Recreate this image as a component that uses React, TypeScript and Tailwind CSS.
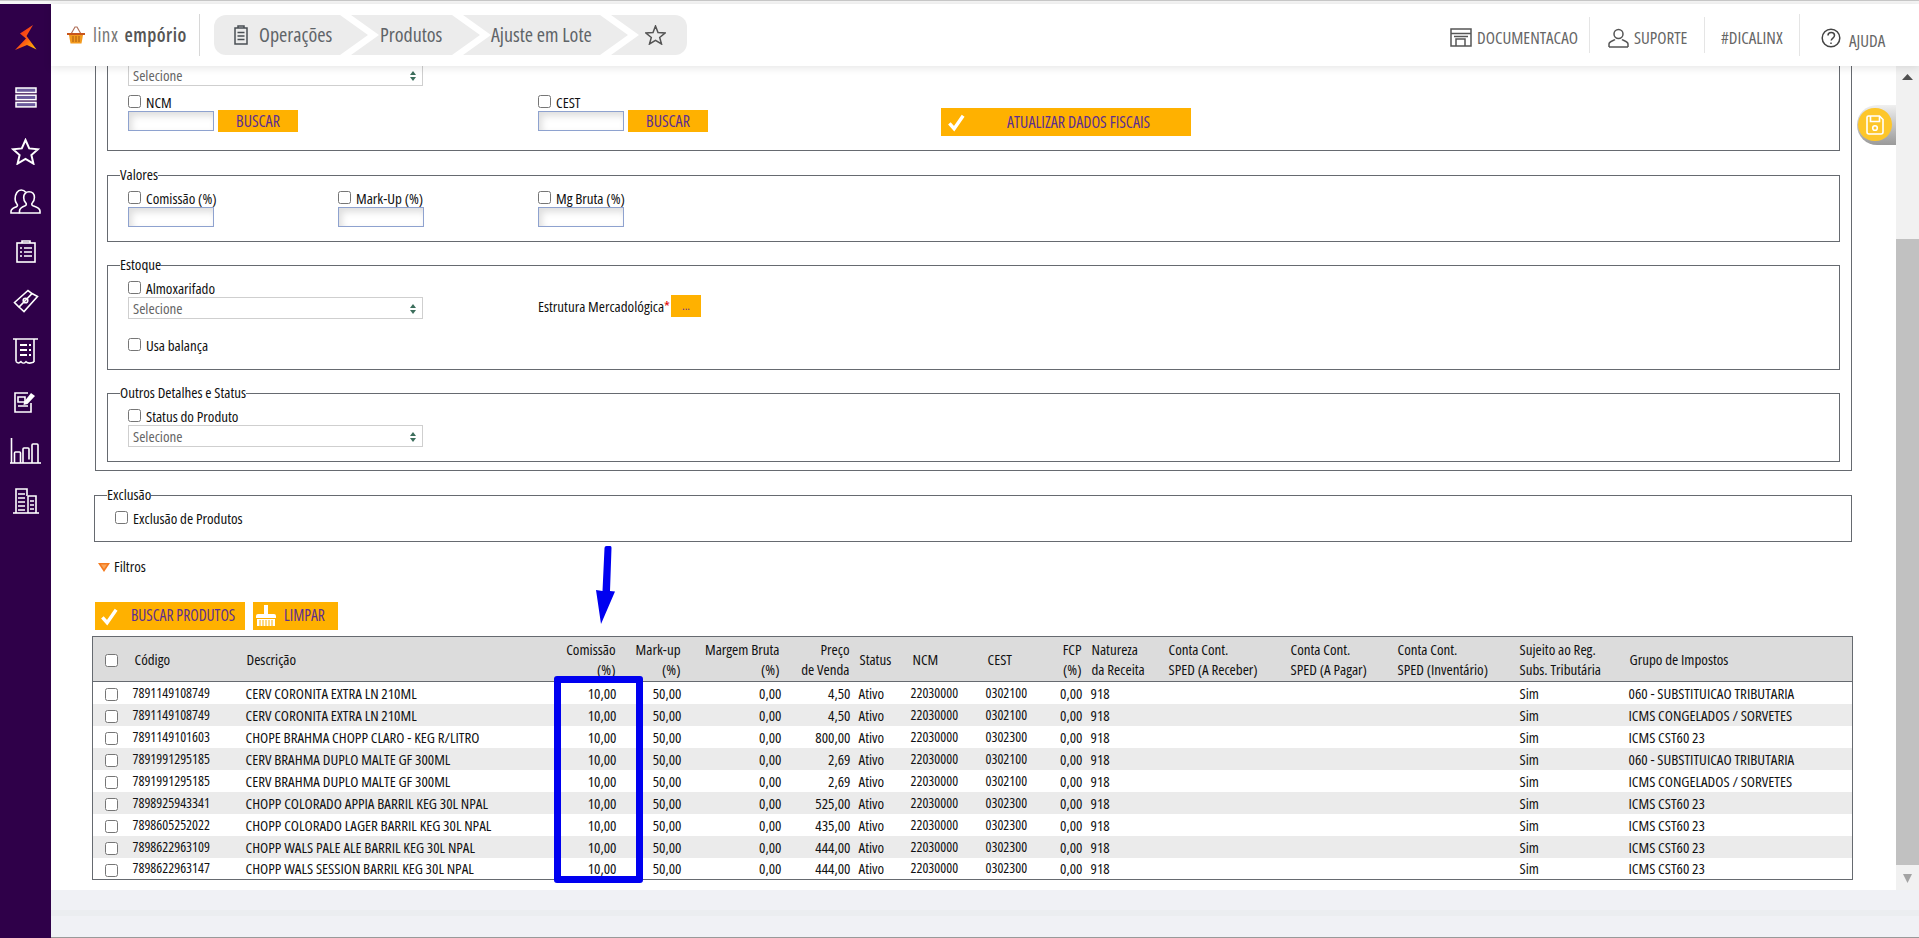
import React from "react";

const rows: [string, string, string, string, string][] = [
  ["7891149108749", "CERV CORONITA EXTRA LN 210ML", "4,50", "0302100", "060 - SUBSTITUICAO TRIBUTARIA"],
  ["7891149108749", "CERV CORONITA EXTRA LN 210ML", "4,50", "0302100", "ICMS CONGELADOS / SORVETES"],
  ["7891149101603", "CHOPE BRAHMA CHOPP CLARO - KEG R/LITRO", "800,00", "0302300", "ICMS CST60 23"],
  ["7891991295185", "CERV BRAHMA DUPLO MALTE GF 300ML", "2,69", "0302100", "060 - SUBSTITUICAO TRIBUTARIA"],
  ["7891991295185", "CERV BRAHMA DUPLO MALTE GF 300ML", "2,69", "0302100", "ICMS CONGELADOS / SORVETES"],
  ["7898925943341", "CHOPP COLORADO APPIA BARRIL KEG 30L NPAL", "525,00", "0302300", "ICMS CST60 23"],
  ["7898605252022", "CHOPP COLORADO LAGER BARRIL KEG 30L NPAL", "435,00", "0302300", "ICMS CST60 23"],
  ["7898622963109", "CHOPP WALS PALE ALE BARRIL KEG 30L NPAL", "444,00", "0302300", "ICMS CST60 23"],
  ["7898622963147", "CHOPP WALS SESSION BARRIL KEG 30L NPAL", "444,00", "0302300", "ICMS CST60 23"],
];

function Check({ className = "" }: { className?: string }) {
  return <input type="checkbox" className={"w-[13px] h-[13px] m-0 shrink-0 " + className} />;
}

function Sel() {
  return (
    <div className="w-[295px] h-[22px] border border-[#cfcfcf] bg-white flex items-end justify-between pl-[4px] pr-[6px] pb-[2px] text-[15px] leading-[15px] text-[#666]">
      <span>Selecione</span>
      <svg width="6" height="10" viewBox="0 0 6 10" className="mb-[2px]"><path d="M3 0 6 4H0z" fill="#3c6e5c" /><path d="M3 10 0 6h6z" fill="#3c6e5c" /></svg>
    </div>
  );
}

function Inp() {
  return <div className="w-[86px] h-[20px] border border-[#8ea2cf] bg-white shadow-[inset_3px_4px_7px_#dedede]" />;
}

function CheckLabel({ children }: { children: React.ReactNode }) {
  return (
    <label className="flex items-start gap-[5px] h-[16px] leading-[15px] text-[15px] text-[#111]">
      <Check />
      <span>{children}</span>
    </label>
  );
}

function OkIcon() {
  return (
    <svg width="19" height="19" viewBox="0 0 20 20" className="shrink-0">
      <path d="M2.500 11 7.500 16.500 17 3" fill="none" stroke="#fff" strokeWidth="3.600" />
    </svg>
  );
}

function Fs({ title, h, mt = "mt-[15px]", children, cls = "" }: { title: string; h: string; mt?: string; children?: React.ReactNode; cls?: string }) {
  return (
    <fieldset className={"border border-[#666a70] block " + h + " " + mt + " " + cls}>
      <legend className="ml-[12px] h-[16px] leading-[15px] text-[15px] text-[#111]">{title}</legend>
      {children}
    </fieldset>
  );
}

const side = "w-full h-[50px] flex items-center justify-center shrink-0";

function Sidebar() {
  const s = { fill: "none", stroke: "#fff", strokeWidth: 1.6 } as const;
  return (
    <aside className="w-[51px] shrink-0 bg-[#2f0049] flex flex-col pt-[21px]">
      <div className="h-[25px] pl-[15px] shrink-0">
        <svg width="22" height="25" viewBox="0 0 22 25">
          <defs>
            <linearGradient id="lg" x1="0" y1="0" x2="1" y2="1">
              <stop offset="0" stopColor="#e3201f" />
              <stop offset="0.55" stopColor="#ff5a12" />
              <stop offset="1" stopColor="#ffc800" />
            </linearGradient>
          </defs>
          <path d="M18 0 5 8.500l6 5L0 25l12-5 9.500 4.500L11.500 11z" fill="url(#lg)" />
        </svg>
      </div>
      <div className="h-[22px]" />
      <div className={side}>
        <svg width="22" height="21" viewBox="0 0 22 21" fill="#6a5a9c" stroke="#fff" strokeWidth="1.500">
          <rect x="1" y="1" width="20" height="4.500" /><rect x="1" y="8.200" width="20" height="4.500" /><rect x="1" y="15.400" width="20" height="4.500" />
        </svg>
      </div>
      <div className="h-[4px]" />
      <div className={side}>
        <svg width="29" height="27" viewBox="0 0 29 27" {...s} strokeWidth={2}>
          <path d="M14.500 2 18.200 10.400 27 11.200 20.400 17 22.400 25.600 14.500 21 6.600 25.600 8.600 17 2 11.200 10.800 10.400z" />
        </svg>
      </div>
      <div className={side}>
        <svg width="31" height="25" viewBox="0 0 31 25" {...s}>
          <path d="M30 24H9.500v-2c0-3 2.400-4 5.600-5.200 1.400-.6 1.600-2 .6-3-1.300-1.200-2-3.200-2-5.300C13.700 5 15.800 2.800 19 2.800S24.400 5 24.400 8.500c0 2.100-.8 4-2 5.300-1 1-.8 2.400.6 3C26.500 18 30 19 30 22z" />
          <path d="M9.500 24H1v-1.500c0-2.800 2.800-3.500 5.500-4.800 1.200-.6 1.200-1.800.4-2.700-1.100-1.200-1.800-3-1.800-5C5.100 4.500 7.800 1 11.200 1c2 0 3.500.8 4.600 2.200" />
        </svg>
      </div>
      <div className={side}>
        <svg width="20" height="23" viewBox="0 0 20 23" {...s}>
          <rect x="1" y="3" width="18" height="19" /><path d="M6 3V1h8v2" />
          <path d="M4 8h2M8 8h8M4 12h2M8 12h8M4 16h2M8 16h8" />
        </svg>
      </div>
      <div className={side}>
        <svg width="26" height="24" viewBox="0 0 26 24" {...s}>
          <path d="M1.500 13.500 15 1.500 19 4.500 6 18zM6 18l5 4.500L24.500 7.500 19 4.500" />
          <circle cx="12.500" cy="11.500" r="2.300" />
        </svg>
      </div>
      <div className={side}>
        <svg width="25" height="27" viewBox="0 0 25 27" {...s}>
          <path d="M0 1h25M3 1v22.500M21 1v23" />
          <path d="M3 23.500c2 2 3 2 5 .2 2 2 3 2 5 0 2 2 4 2 8 .3" />
          <path d="M7 7h7M16 7h2M7 12h7M16 12h2M7 17h7M16 17h2" strokeWidth="1.800" />
        </svg>
      </div>
      <div className={side}>
        <svg width="23" height="23" viewBox="0 0 23 23" {...s}>
          <path d="M17 13v9H1V3h13" />
          <path d="M4 7h7v5H4zM4 16h10" />
          <path d="M10 12 17 3l4 3-7.500 8-4 1z" fill="#fff" stroke="none" />
        </svg>
      </div>
      <div className={side}>
        <svg width="31" height="26" viewBox="0 0 31 26" {...s}>
          <path d="M0 25h31" /><path d="M1.500 0v25M4.500 25V15a1 1 0 0 1 1-1h4a1 1 0 0 1 1 1v10M13 25V11a1 1 0 0 1 1-1h4a1 1 0 0 1 1 1v10.500M22 25V7a1 1 0 0 1 1-1h4a1 1 0 0 1 1 1v18" />
        </svg>
      </div>
      <div className={side}>
        <svg width="26" height="26" viewBox="0 0 26 26" {...s}>
          <path d="M0 25h26" />
          <path d="M3 25V1h11v7M15 8h8v17" />
          <path d="M15 25V8M5 6h7M5 10h7M5 14h7M5 18h7M5 22h7M17 13h4M17 17h4M17 21h4" strokeWidth="1.500" />
        </svg>
      </div>
    </aside>
  );
}

function Chevron() {
  return (
    <svg width="39" height="40" viewBox="0 0 39 40" className="shrink-0 -mr-[28px] relative z-[1]">
      <path d="M0 0H11L39 20 11 40H0L28 20z" fill="#fff" />
    </svg>
  );
}

function Crumbs() {
  return (
    <div className="ml-[14px] w-[473px] h-[40px] rounded-[12px] bg-[#ececec] flex overflow-hidden text-[20px] text-[#5f6468]">
      <div className="w-[126px] shrink-0 flex items-center pl-[20px] gap-[11px]">
        <svg width="14" height="20" viewBox="0 0 14 20" fill="none" stroke="#4a4f54" strokeWidth="1.500" className="shrink-0">
          <rect x="1" y="3" width="12" height="16" /><path d="M4 3V1h6v2M3.500 7.500h7M3.500 11h7M3.500 14.500h7" />
        </svg>
        <span>Operações</span>
      </div>
      <Chevron />
      <div className="w-[101px] shrink-0 flex items-center pl-[29px]">Produtos</div>
      <Chevron />
      <div className="w-[137px] shrink-0 flex items-center pl-[28px]">Ajuste em Lote</div>
      <Chevron />
      <div className="w-[76px] shrink-0 flex items-center pl-[34px]">
        <svg width="21" height="20" viewBox="0 0 21 20" fill="none" stroke="#555" strokeWidth="1.500">
          <path d="M10.500 1 13 7.500 20 8 14.700 12.500 16.500 19 10.500 15.300 4.500 19 6.300 12.500 1 8 8 7.500z" />
        </svg>
      </div>
    </div>
  );
}

function Header() {
  return (
    <header className="h-[62px] shrink-0 bg-white shadow-[0_2px_8px_rgba(0,0,0,0.1)] relative z-10 flex items-start">
      <div className="mt-[10px] h-[42px] w-[149px] shrink-0 border-r border-[#d8d8d8] flex items-center pl-[16px]">
        <svg width="18" height="18" viewBox="0 0 18 18" className="shrink-0">
          <path d="M4 8 8 1h2l4 7" fill="none" stroke="#b0705a" strokeWidth="1.200" />
          <path d="M0 7h18v2H0z" fill="#c8551b" />
          <path d="M2 9h14l-1.500 8.500h-11z" fill="#f39a1e" />
          <path d="M6 10v6M9 10v6M12 10v6" stroke="#a85a10" strokeWidth="1" />
        </svg>
        <span className="ml-[8px] text-[19px] text-[#777] tracking-[0.5px]">linx</span>
        <span className="ml-[6px] text-[19px] font-semibold text-[#555] tracking-[0.5px]">empório</span>
      </div>
      <div className="mt-[11px]"><Crumbs /></div>
      <div className="ml-auto flex items-start text-[17px] text-[#666] h-[62px]">
        <div className="w-[140px] h-[36px] mt-[13px] flex items-center border-r border-[#e5e5e5] pt-[5px]">
          <svg width="22" height="19" viewBox="0 0 22 19" fill="none" stroke="#555" strokeWidth="1.500" className="mr-[5px] shrink-0">
            <rect x="1" y="1" width="20" height="17" /><path d="M1 5.500h20M4 8.500h14M6 18V11h9v7" />
          </svg>
          DOCUMENTACAO
        </div>
        <div className="w-[115px] h-[36px] mt-[13px] flex items-center border-r border-[#e5e5e5] pl-[18px] pt-[5px]">
          <svg width="21" height="20" viewBox="0 0 21 20" fill="none" stroke="#555" strokeWidth="1.500" className="mr-[5px] shrink-0">
            <circle cx="10.500" cy="6" r="4.500" /><path d="M1 19v-3c0-2.500 5-3.500 6-4.500M20 19v-3c0-2.500-5-3.500-6-4.500M1 19h19" />
          </svg>
          SUPORTE
        </div>
        <div className="w-[94px] h-[36px] mt-[13px] flex items-center pl-[16px] pt-[5px]">#DICALINX</div>
        <div className="w-[120px] h-[42px] mt-[10px] flex items-center pl-[21px] border-l border-[#e5e5e5] pt-[12px]">
          <svg width="20" height="20" viewBox="0 0 20 20" fill="none" stroke="#444" strokeWidth="1.500" className="mr-[8px] -mt-[7px] shrink-0">
            <circle cx="10" cy="10" r="8.800" /><path d="M7 7.500c0-4 6.500-4 6.500 0 0 2.500-3 2.500-3.300 5" /><path d="M10 14.500v1.500" />
          </svg>
          AJUDA
        </div>
      </div>
    </header>
  );
}

function Scrollbar() {
  return (
    <div className="w-[23px] shrink-0 bg-[#f1f1f1] flex flex-col items-center">
      <svg width="11" height="6" viewBox="0 0 11 6" className="mt-[8px] shrink-0"><path d="M5.500 0 11 6H0z" fill="#505050" /></svg>
      <div className="h-[159px] shrink-0" />
      <div className="w-full h-[626px] bg-[#c1c1c1] shrink-0" />
      <svg width="9" height="9" viewBox="0 0 9 9" className="mt-[9px] shrink-0"><path d="M4.500 9 9 0H0z" fill="#a3a3a3" /></svg>
    </div>
  );
}

const th = "font-normal align-middle leading-[20px] ";
const td = "h-[22px] p-0 whitespace-nowrap leading-[20px] ";

function Table() {
  return (
    <div className="ml-[41px] mr-[42px] mt-[6px] relative">
      <svg width="24" height="80" viewBox="0 0 24 80" className="absolute left-[503px] -top-[90px]">
        <path d="M11.500 0h4a2 2 0 0 1 1 2L15 45l5 .5L6 78 1 44l6.500 1L9.500 2a2 2 0 0 1 2-2z" fill="#0000f0" />
      </svg>
      <div className="absolute left-[462px] top-[40px] w-[89px] h-[207px] border-[7px] border-[#0000f0] rounded-[3px] z-[1]" />
      <table className="table-fixed w-[1761px] border-collapse border border-[#666a70] text-[15px] text-[#111]">
        <colgroup>
          <col className="w-[38px]" /><col className="w-[113px]" /><col className="w-[317px]" /><col className="w-[58px]" />
          <col className="w-[65px]" /><col className="w-[100px]" /><col className="w-[69px]" /><col className="w-[56px]" />
          <col className="w-[75px]" /><col className="w-[61px]" /><col className="w-[40px]" /><col className="w-[82px]" />
          <col className="w-[122px]" /><col className="w-[107px]" /><col className="w-[122px]" /><col className="w-[109px]" /><col />
        </colgroup>
        <thead>
          <tr className="h-[45px] bg-[#dcdcdc] border-b border-[#666a70]">
            <th className={th}><Check className="align-middle" /></th>
            <th className={th + "text-left pl-[4px]"}>Código</th>
            <th className={th + "text-left pl-[3px]"}>Descrição</th>
            <th className={th + "text-right pr-[3px]"}>Comissão<br />(%)</th>
            <th className={th + "text-right pr-[3px]"}>Mark-up<br />(%)</th>
            <th className={th + "text-right pr-[4px]"}>Margem Bruta<br />(%)</th>
            <th className={th + "text-right pr-[3px]"}>Preço<br />de Venda</th>
            <th className={th + "text-left pl-[7px]"}>Status</th>
            <th className={th + "text-left pl-[4px]"}>NCM</th>
            <th className={th + "text-left pl-[4px]"}>CEST</th>
            <th className={th + "text-right pr-[3px]"}>FCP<br />(%)</th>
            <th className={th + "text-left pl-[7px]"}>Natureza<br />da Receita</th>
            <th className={th + "text-left pl-[2px]"}>Conta Cont.<br />SPED (A Receber)</th>
            <th className={th + "text-left pl-[2px]"}>Conta Cont.<br />SPED (A Pagar)</th>
            <th className={th + "text-left pl-[2px]"}>Conta Cont.<br />SPED (Inventário)</th>
            <th className={th + "text-left pl-[2px]"}>Sujeito ao Reg.<br />Subs. Tributária</th>
            <th className={th + "text-left pl-[3px]"}>Grupo de Impostos</th>
          </tr>
        </thead>
        <tbody>
          {rows.map((r, i) => (
            <tr key={i} className={i % 2 ? "bg-[#ebebeb]" : "bg-white"}>
              <td className={td + "text-center"}><Check className="align-middle" /></td>
              <td className={td + "pl-[2px] text-[14px]"}>{r[0]}</td>
              <td className={td + "pl-[2px]"}>{r[1]}</td>
              <td className={td + "text-right pr-[2px]"}>10,00</td>
              <td className={td + "text-right pr-[2px]"}>50,00</td>
              <td className={td + "text-right pr-[2px]"}>0,00</td>
              <td className={td + "text-right pr-[2px]"}>{r[2]}</td>
              <td className={td + "pl-[6px]"}>Ativo</td>
              <td className={td + "pl-[2px] text-[14px]"}>22030000</td>
              <td className={td + "pl-[2px] text-[14px]"}>{r[3]}</td>
              <td className={td + "text-right pr-[2px]"}>0,00</td>
              <td className={td + "pl-[6px]"}>918</td>
              <td className={td} /><td className={td} /><td className={td} />
              <td className={td + "pl-[2px]"}>Sim</td>
              <td className={td + "pl-[2px]"}>{r[4]}</td>
            </tr>
          ))}
        </tbody>
      </table>
    </div>
  );
}

function SaveBtn() {
  return (
    <div className="absolute right-0 top-[39px] w-[39px] h-[40px] rounded-l-[20px] bg-gradient-to-b from-[#f0f0f0] to-[#9a9a9a] z-[2]">
      <div className="ml-[1px] mt-[3px] w-[34px] h-[33px] rounded-full bg-[#fdc62a] flex items-center justify-center">
        <svg width="18" height="20" viewBox="0 0 18 20" fill="none" stroke="#fff" strokeWidth="1.600">
          <path d="M2.500 1h11L17 4.500V17a2 2 0 0 1-2 2H3a2 2 0 0 1-2-2V2.500A1.500 1.500 0 0 1 2.500 1z" />
          <path d="M4.500 1v5.500h9V1" />
          <circle cx="9" cy="13" r="2.300" />
        </svg>
      </div>
    </div>
  );
}

function Content() {
  const orange = "bg-[#ffb100] text-[#5c2d91] flex items-center shrink-0";
  return (
    <div className="flex-1 bg-white overflow-hidden min-w-0 relative">
      <SaveBtn />
      <div className="ml-[44px] mr-[44px] h-[405px] border-x border-b border-[#666a70] px-[11px]">
        <div className="h-[85px] border-x border-b border-[#666a70] pl-[20px] flow-root">
          <div className="-mt-[2px]"><Sel /></div>
          <div className="flex mt-[9px]">
            <div className="w-[410px]">
              <CheckLabel>NCM</CheckLabel>
              <div className="flex items-center gap-[4px] h-[20px]">
                <Inp />
                <div className={orange + " w-[80px] h-[22px] justify-center text-[16px]"}>BUSCAR</div>
              </div>
            </div>
            <div className="w-[403px]">
              <CheckLabel>CEST</CheckLabel>
              <div className="flex items-center gap-[4px] h-[20px]">
                <Inp />
                <div className={orange + " w-[80px] h-[22px] justify-center text-[16px]"}>BUSCAR</div>
              </div>
            </div>
            <div className={orange + " w-[250px] h-[28px] mt-[13px] pl-[6px] text-[16px]"}>
              <OkIcon />
              <span className="ml-[41px]">ATUALIZAR DADOS FISCAIS</span>
            </div>
          </div>
        </div>

        <Fs title="Valores" h="h-[75px]" mt="mt-[16px]">
          <div className="flex pl-[20px] pt-[8px]">
            {[["Comissão (%)", "w-[210px]"], ["Mark-Up (%)", "w-[200px]"], ["Mg Bruta (%)", "w-[200px]"]].map(([t, w]) => (
              <div key={t} className={w}>
                <CheckLabel>{t}</CheckLabel>
                <Inp />
              </div>
            ))}
          </div>
        </Fs>

        <Fs title="Estoque" h="h-[113px]">
          <div className="pl-[20px] pt-[8px]">
            <CheckLabel>Almoxarifado</CheckLabel>
            <div className="flex items-start">
              <Sel />
              <div className="ml-[115px] flex items-center -mt-[2px] text-[15px] text-[#111]">
                <span className="w-[133px]">Estrutura Mercadológica<span className="text-[#e00000]">*</span></span>
                <div className={orange + " w-[30px] h-[22px] justify-center text-[12px]"}>...</div>
              </div>
            </div>
            <div className="mt-[19px]"><CheckLabel>Usa balança</CheckLabel></div>
          </div>
        </Fs>

        <Fs title="Outros Detalhes e Status" h="h-[77px]">
          <div className="pl-[20px] pt-[8px]">
            <CheckLabel>Status do Produto</CheckLabel>
            <Sel />
          </div>
        </Fs>
      </div>

      <Fs title="Exclusão" h="h-[55px]" mt="mt-[16px]" cls="ml-[43px] mr-[44px]">
        <div className="pl-[20px] pt-[8px]"><CheckLabel>Exclusão de Produtos</CheckLabel></div>
      </Fs>

      <div className="ml-[47px] mt-[17px] flex items-center gap-[4px] h-[16px] leading-[14px] text-[15px] text-[#111]">
        <svg width="12" height="9" viewBox="0 0 12 9"><path d="M0 0H12L6 9z" fill="#f47b20" /><path d="M3 1.500H9L6 6z" fill="#f9a65a" /></svg>
        <span className="-mt-[2px]">Filtros</span>
      </div>

      <div className="ml-[44px] mt-[27px] flex gap-[8px] text-[15.500px]">
        <div className={orange + " w-[150px] h-[28px] pl-[5px]"}>
          <OkIcon />
          <span className="ml-[12px]">BUSCAR PRODUTOS</span>
        </div>
        <div className={orange + " w-[85px] h-[28px] pl-[3px]"}>
          <svg width="20" height="22" viewBox="0 0 20 22" className="shrink-0">
            <path d="M8 0h4v9h6a2 2 0 0 1 2 2v2H0v-2a2 2 0 0 1 2-2h6z" fill="#fff" />
            <path d="M1 14h18v7H1z" fill="#fff" />
            <path d="M4 15v6M7 15v6M10 15v6M13 15v6M16 15v6" stroke="#ffb100" />
          </svg>
          <span className="ml-[8px]">LIMPAR</span>
        </div>
      </div>

      <Table />
    </div>
  );
}

export default function App() {
  return (
    <div className="w-[1919px] h-[938px] overflow-hidden whitespace-nowrap flex flex-col bg-[#f0f1f5] [font-family:'Open_Sans','Roboto',sans-serif] [font-stretch:75%]">
      <div className="h-[4px] shrink-0 bg-[#f5f5f5] border-t border-[#c8c8c8]" />
      <div className="flex-1 flex min-h-0">
        <Sidebar />
        <div className="flex-1 flex flex-col min-w-0">
          <Header />
          <div className="h-[824px] shrink-0 flex">
            <Content />
            <Scrollbar />
          </div>
          <div className="h-[20px] shrink-0" />
          <div className="h-[6px] shrink-0 bg-[#ebedf0]" />
          <div className="flex-1 border-b border-[#999]" />
        </div>
      </div>
    </div>
  );
}
